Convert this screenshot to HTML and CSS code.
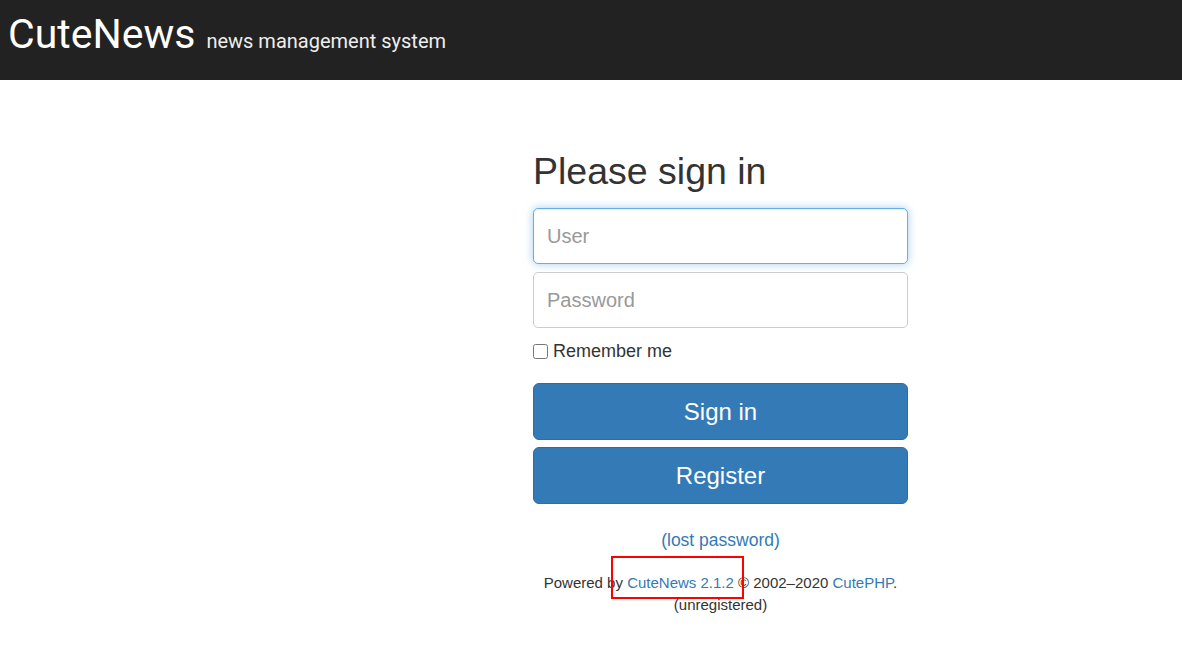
FILE: index.html
```html
<!DOCTYPE html>
<html>
<head>
<meta charset="utf-8">
<title>CuteNews</title>
<link rel="stylesheet" href="styles.css">
</head>
<body>
<header class="topbar">
  <span class="brand">CuteNews</span>
  <span class="tagline">news management system</span>
</header>
<main class="page">
  <form class="signin">
    <h2 class="title">Please sign in</h2>
    <input class="field focused" type="text" placeholder="User">
    <input class="field" type="password" placeholder="Password">
    <label class="remember"><input type="checkbox" class="check"> Remember me</label>
    <button type="button" class="btn">Sign in</button>
    <button type="button" class="btn">Register</button>
    <div class="lost"><a href="#">(lost password)</a></div>
    <div class="powered">
      <span class="line">Powered by <a href="#">CuteNews 2.1.2</a> © 2002–2020 <a href="#">CutePHP</a>.</span>
      <span class="line">(unregistered)</span>
      <span class="mark"></span>
    </div>
  </form>
</main>
</body>
</html>
```
FILE: styles.css
```css
* { box-sizing: border-box; }
body {
  margin: 0;
  font-family: "Liberation Sans", Arial, sans-serif;
  color: #333;
  background: #fff;
}
.topbar {
  height: 80px;
  background: #222;
  display: flex;
  align-items: baseline;
  padding: 10px 8px 0;
}
.brand {
  font-family: Roboto, sans-serif;
  font-size: 41px;
  color: #fff;
  line-height: 48px;
}
.tagline {
  font-family: Roboto, sans-serif;
  font-size: 20px;
  color: #eee;
  margin-left: 11px;
}
.page {
  display: grid;
  grid-template-columns: 533px 375px;
}
.signin {
  grid-column: 2;
  display: flex;
  flex-direction: column;
  padding-top: 67px;
}
.title {
  font-size: 37.5px;
  font-weight: normal;
  margin: 0 0 13px;
  line-height: 48px;
  color: #333;
}
.field {
  height: 56px;
  width: 100%;
  border: 1px solid #ccc;
  border-radius: 5px;
  padding: 0 13px;
  font-family: "Liberation Sans", Arial, sans-serif;
  font-size: 20px;
  color: #555;
  margin: 0 0 8px;
  outline: none;
}
.field::placeholder { color: #999; }
.field.focused {
  border-color: #66afe9;
  box-shadow: inset 0 1px 1px rgba(0,0,0,.075), 0 0 8px rgba(102,175,233,.6);
}
.remember {
  display: flex;
  align-items: center;
  font-size: 18px;
  color: #333;
  margin: 1px 0 18px;
  line-height: 28px;
  gap: 5px;
}
.check {
  width: 15px;
  height: 15px;
  margin: 0;
}
.btn {
  height: 57px;
  width: 100%;
  background: #337ab7;
  border: 1px solid #2e6da4;
  border-radius: 6px;
  color: #fff;
  font-family: "Liberation Sans", Arial, sans-serif;
  font-size: 24px;
  margin: 0 0 7px;
}
.lost {
  text-align: center;
  font-size: 17.5px;
  margin-top: 16px;
  line-height: 26px;
}
a { color: #337ab7; text-decoration: none; }
.powered {
  position: relative;
  text-align: center;
  font-size: 15px;
  margin-top: 19px;
  line-height: 22px;
  display: flex;
  flex-direction: column;
  align-items: center;
}
.mark {
  position: absolute;
  left: 78px;
  top: -16px;
  width: 133px;
  height: 43px;
  border: 2px solid #f00;
}
```
